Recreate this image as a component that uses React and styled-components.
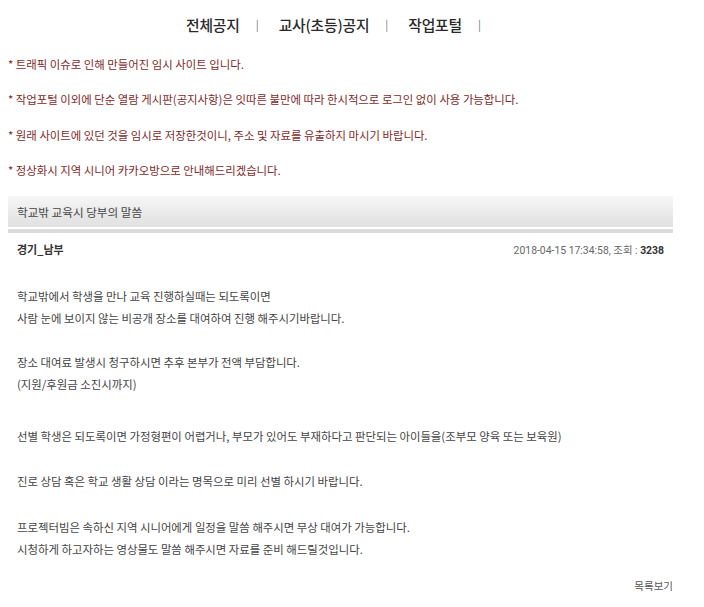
import React from "react";
import styled, { createGlobalStyle } from "styled-components";

const Global = createGlobalStyle`
  html, body { margin: 0; padding: 0; background: #fff; }
  body { font-family: "Noto Sans CJK KR", "Noto Sans", sans-serif; }
`;

const Page = styled.div`
  width: 704px;
  min-height: 607px;
  padding: 0 31px 0 8px;
  box-sizing: border-box;
`;

const Nav = styled.nav`
  display: flex;
  justify-content: center;
  align-items: center;
  padding-top: 13px;
  height: 22px;
  padding-left: 6px;
`;

const NavItem = styled.a`
  font-size: 14.8px;
  font-weight: 500;
  color: #2a2a2a;
  text-decoration: none;
  letter-spacing: -0.2px;
`;

const NavSep = styled.span`
  font-size: 11px;
  color: #777;
  margin: 0 20px 0 16px;
`;

const Notices = styled.div`
  display: flex;
  flex-direction: column;
  gap: 19.5px;
  margin-top: 20.5px;
`;

const Notice = styled.p`
  margin: 0;
  font-size: 11.4px;
  line-height: 16px;
  color: #7e2a2a;
`;

const Board = styled.div`
  margin-top: 18px;
`;

const TitleBar = styled.div`
  height: 31px;
  display: flex;
  align-items: center;
  padding-left: 9px;
  background: linear-gradient(#f7f7f7, #e6e6e6 70%, #e2e2e2);
  font-size: 11.6px;
  color: #444;
  border-bottom: 2px solid #fff;
  box-shadow: 0 4px 0 #dcdcdc;
`;

const Meta = styled.div`
  display: flex;
  justify-content: space-between;
  align-items: center;
  margin-top: 12px;
  padding: 0 9px;
`;

const Author = styled.span`
  font-size: 11px;
  font-weight: bold;
  color: #333;
`;

const Info = styled.span`
  font-family: Roboto, "Noto Sans CJK KR", sans-serif;
  font-size: 10.4px;
  color: #666;
  b { color: #333; }
`;

const Body = styled.div`
  padding: 27.5px 9px 0;
  display: flex;
  flex-direction: column;
`;

const Para = styled.div`
  margin-bottom: ${(p) => p.$gap}px;
`;

const Line = styled.p`
  margin: 0;
  font-size: 11.4px;
  line-height: 22.5px;
  color: #444;
`;

const Footer = styled.div`
  display: flex;
  justify-content: flex-end;
  margin-top: 4px;
`;

const ListLink = styled.a`
  font-size: 10.5px;
  color: #555;
  text-decoration: none;
`;

const paragraphs = [
  {
    gap: 21,
    lines: [
      "학교밖에서 학생을 만나 교육 진행하실때는 되도록이면",
      "사람 눈에 보이지 않는 비공개 장소를 대여하여 진행 해주시기바랍니다.",
    ],
  },
  {
    gap: 29,
    lines: [
      "장소 대여료 발생시 청구하시면 추후 본부가 전액 부담합니다.",
      "(지원/후원금 소진시까지)",
    ],
  },
  {
    gap: 23,
    lines: [
      "선별 학생은 되도록이면 가정형편이 어렵거나, 부모가 있어도 부재하다고 판단되는 아이들을(조부모 양육 또는 보육원)",
    ],
  },
  {
    gap: 23,
    lines: ["진로 상담 혹은 학교 생활 상담 이라는 명목으로 미리 선별 하시기 바랍니다."],
  },
  {
    gap: 13,
    lines: [
      "프로젝터빔은 속하신 지역 시니어에게 일정을 말씀 해주시면 무상 대여가 가능합니다.",
      "시청하게 하고자하는 영상물도 말씀 해주시면 자료를 준비 해드릴것입니다.",
    ],
  },
];

const notices = [
  "* 트래픽 이슈로 인해 만들어진 임시 사이트 입니다.",
  "* 작업포털 이외에 단순 열람 게시판(공지사항)은 잇따른 불만에 따라 한시적으로 로그인 없이 사용 가능합니다.",
  "* 원래 사이트에 있던 것을 임시로 저장한것이니, 주소 및 자료를 유출하지 마시기 바랍니다.",
  "* 정상화시 지역 시니어 카카오방으로 안내해드리겠습니다.",
];

export default function App() {
  return (
    <Page>
      <Global />
      <Nav>
        <NavItem href="#">전체공지</NavItem>
        <NavSep>|</NavSep>
        <NavItem href="#">교사(초등)공지</NavItem>
        <NavSep>|</NavSep>
        <NavItem href="#">작업포털</NavItem>
        <NavSep>|</NavSep>
      </Nav>
      <Notices>
        {notices.map((n) => (
          <Notice key={n}>{n}</Notice>
        ))}
      </Notices>
      <Board>
        <TitleBar>학교밖 교육시 당부의 말씀</TitleBar>
        <Meta>
          <Author>경기_남부</Author>
          <Info>
            2018-04-15 17:34:58, 조회 : <b>3238</b>
          </Info>
        </Meta>
        <Body>
          {paragraphs.map((p, i) => (
            <Para key={i} $gap={p.gap}>
              {p.lines.map((l) => (
                <Line key={l}>{l}</Line>
              ))}
            </Para>
          ))}
        </Body>
        <Footer>
          <ListLink href="#">목록보기</ListLink>
        </Footer>
      </Board>
    </Page>
  );
}
